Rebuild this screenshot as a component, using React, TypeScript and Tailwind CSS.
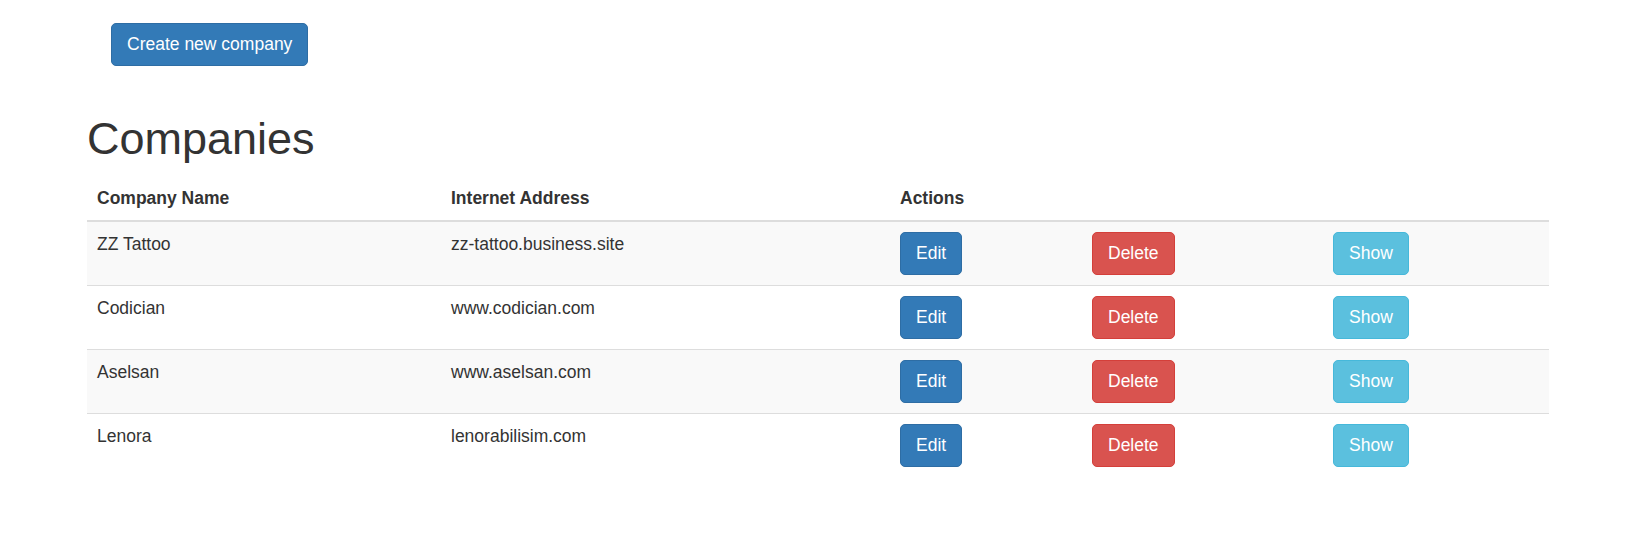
import React from 'react';

type Company = { name: string; url: string };

const companies: Company[] = [
  { name: 'ZZ Tattoo', url: 'zz-tattoo.business.site' },
  { name: 'Codician', url: 'www.codician.com' },
  { name: 'Aselsan', url: 'www.aselsan.com' },
  { name: 'Lenora', url: 'lenorabilisim.com' },
];

const btn =
  'inline-block rounded-[5px] border px-[15px] py-[8px] text-[17.5px] leading-[25px] text-white';

const App: React.FC = () => {
  return (
    <div className="min-h-[551px] bg-white text-[17.5px] leading-[25px] text-[#333] font-['Liberation_Sans',Arial,sans-serif]">
      <div className="pl-[111px] pt-[23px]">
        <button className={`${btn} bg-[#337ab7] border-[#2e6da4]`}>Create new company</button>
      </div>

      <div className="ml-[87px] w-[1462px]">
        <h1 className="mt-[48px] mb-[12px] text-[45px] leading-[49.5px] font-normal">Companies</h1>

        <table className="w-full table-fixed border-collapse">
          <colgroup>
            <col className="w-[354px]" />
            <col className="w-[449px]" />
            <col className="w-[192px]" />
            <col className="w-[241px]" />
            <col />
          </colgroup>
          <thead>
            <tr className="border-b-2 border-[#ddd]">
              <th className="px-[10px] pt-[10px] pb-[9px] text-left font-bold">Company Name</th>
              <th className="px-[10px] pt-[10px] pb-[9px] text-left font-bold">Internet Address</th>
              <th className="px-[10px] pt-[10px] pb-[9px] text-left font-bold" colSpan={3}>Actions</th>
            </tr>
          </thead>
          <tbody>
            {companies.map((c, i) => (
              <tr key={c.name} className={`border-b border-[#ddd] last:border-b-0 ${i % 2 === 0 ? 'bg-[#f9f9f9]' : 'bg-white'}`}>
                <td className="p-[10px] align-top">{c.name}</td>
                <td className="p-[10px] align-top">{c.url}</td>
                <td className="p-[10px] align-top">
                  <button className={`${btn} bg-[#337ab7] border-[#2e6da4]`}>Edit</button>
                </td>
                <td className="p-[10px] align-top">
                  <button className={`${btn} bg-[#d9534f] border-[#d43f3a]`}>Delete</button>
                </td>
                <td className="p-[10px] align-top">
                  <button className={`${btn} bg-[#5bc0de] border-[#46b8da]`}>Show</button>
                </td>
              </tr>
            ))}
          </tbody>
        </table>
      </div>
    </div>
  );
};

export default App;
